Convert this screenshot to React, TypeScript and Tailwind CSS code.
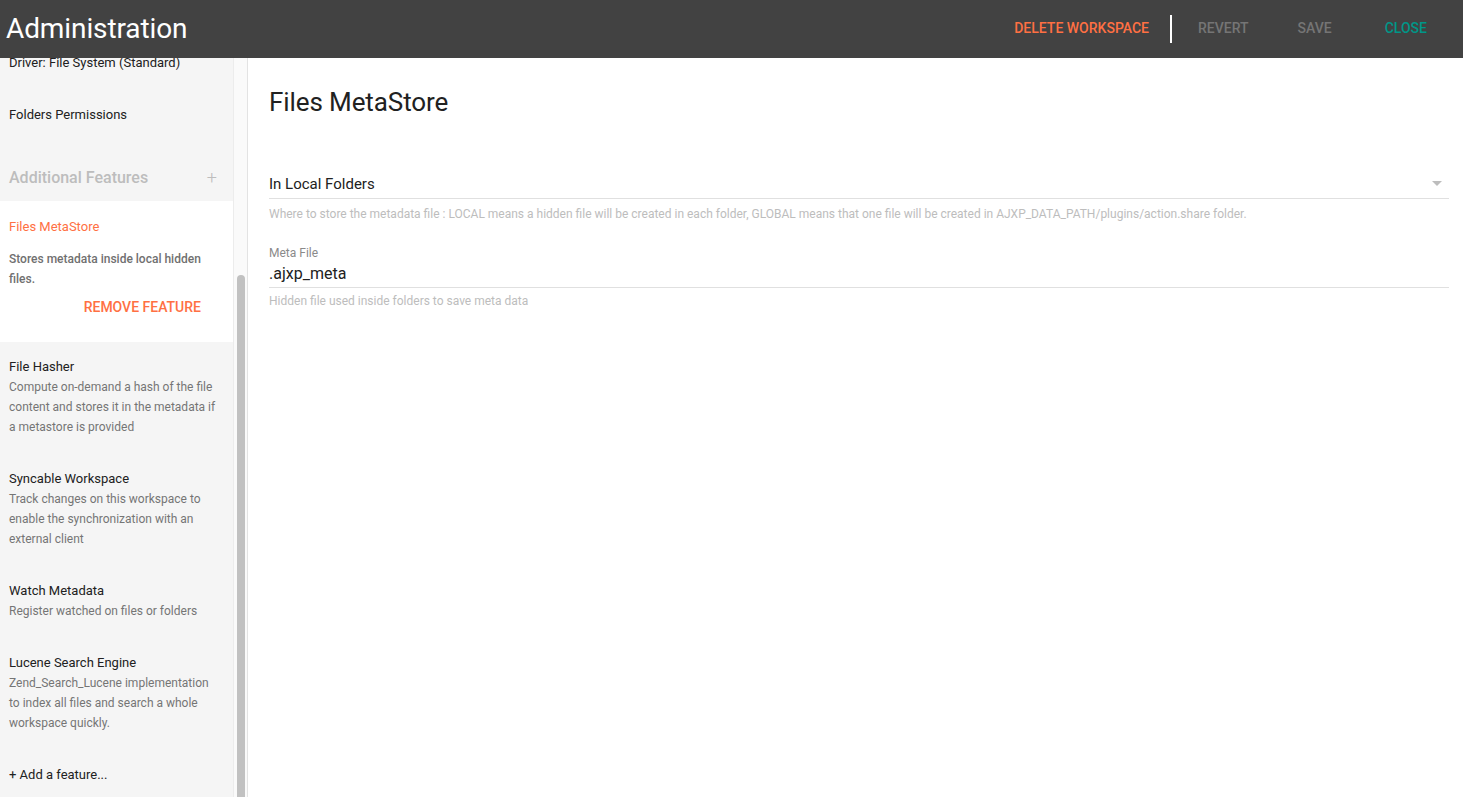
const features = [
  {
    title: 'File Hasher',
    desc: 'Compute on-demand a hash of the file content and stores it in the metadata if a metastore is provided',
  },
  {
    title: 'Syncable Workspace',
    desc: 'Track changes on this workspace to enable the synchronization with an external client',
  },
  {
    title: 'Watch Metadata',
    desc: 'Register watched on files or folders',
  },
  {
    title: 'Lucene Search Engine',
    desc: 'Zend_Search_Lucene implementation to index all files and search a whole workspace quickly.',
  },
];

const Header = () => (
  <div className="h-[58px] bg-[#424242] flex items-center justify-between shrink-0">
    <h1 className="pl-[6px] text-[28px] text-white leading-none tracking-[-0.1px]">Administration</h1>
    <div className="flex items-center h-full pr-[20px] -mt-[1px]">
      <button className="px-[15px] text-[14px] font-medium text-[#ff7043] uppercase">Delete Workspace</button>
      <div className="w-[2px] h-[28px] bg-white mx-[6px] mt-[1px]" />
      <button className="ml-[4px] px-[16px] text-[14px] font-medium text-[#757575] uppercase">Revert</button>
      <button className="ml-[17px] px-[16px] text-[14px] font-medium text-[#757575] uppercase">Save</button>
      <button className="ml-[21px] px-[16px] text-[14px] font-medium text-[#009688] uppercase">Close</button>
    </div>
  </div>
);

const Sidebar = () => (
  <div className="flex shrink-0 h-full">
    <div className="w-[233px] bg-[#f5f5f5] overflow-hidden">
      <div className="-mt-[3px] px-[9px] text-[13px] leading-[16px] text-[#212121]">Driver: File System (Standard)</div>
      <div className="px-[9px] pt-[36px] text-[13px] leading-[16px] text-[#212121]">Folders Permissions</div>
      <div className="px-[9px] pt-[45px] pb-[13px] flex items-center justify-between">
        <span className="text-[16px] leading-[20px] font-medium text-[#bdbdbd]">Additional Features</span>
        <span className="pr-[7px] text-[18px] leading-[20px] font-light text-[#bdbdbd]">+</span>
      </div>
      <div className="bg-white px-[9px] pt-[18px] pb-[26px]">
        <div className="text-[13px] leading-[16px] text-[#ff7043]">Files MetaStore</div>
        <div className="pt-[14px] text-[12px] leading-[20px] font-medium text-[#707070] pr-[20px]">
          Stores metadata inside local hidden files.
        </div>
        <div className="flex justify-end pr-[23px] pt-[9px]">
          <span className="text-[14px] leading-[18px] font-medium text-[#ff7043] uppercase">Remove Feature</span>
        </div>
      </div>
      <div className="px-[9px] pt-[17px]">
        {features.map((f) => (
          <div key={f.title} className="pb-[34px]">
            <div className="text-[13px] leading-[16px] text-[#212121]">{f.title}</div>
            <div className="pt-[2px] text-[12px] leading-[20px] text-[#757575] pr-[8px]">{f.desc}</div>
          </div>
        ))}
        <div className="text-[13px] leading-[16px] text-[#212121]">+ Add a feature...</div>
      </div>
    </div>
    <div className="w-[15px] bg-[#fafafa] border-l border-[#ececec] border-r border-r-[#e3e3e3] flex flex-col items-center pt-[217px]">
      <div className="w-[8px] flex-1 bg-[#c1c1c1] rounded-t-[4px]" />
    </div>
  </div>
);

const Main = () => (
  <div className="flex-1 bg-white pl-[21px] pr-[14px] pt-[27px]">
    <h2 className="text-[26px] leading-[34px] text-[#212121] tracking-[-0.1px]">Files MetaStore</h2>
    <div className="pt-[54px]">
      <div className="flex items-center justify-between border-b border-[#e0e0e0] pb-[3px]">
        <span className="text-[15px] leading-[22px] text-[#212121]">In Local Folders</span>
        <svg width="12" height="6" viewBox="0 0 12 6" className="mr-[6px]">
          <path d="M1 0 L11 0 L6 5 Z" fill="#bdbdbd" />
        </svg>
      </div>
      <div className="pt-[7px] text-[12px] leading-[16px] text-[#bdbdbd]">
        Where to store the metadata file : LOCAL means a hidden file will be created in each folder, GLOBAL means that one file will be created in AJXP_DATA_PATH/plugins/action.share folder.
      </div>
    </div>
    <div className="pt-[24px]">
      <div className="text-[12px] leading-[14px] text-[#8a8a8a]">Meta File</div>
      <div className="border-b border-[#e0e0e0] pt-[2px] pb-[1px]">
        <span className="text-[16px] leading-[20px] text-[#212121]">.ajxp_meta</span>
      </div>
      <div className="pt-[5px] text-[12px] leading-[16px] text-[#bdbdbd]">Hidden file used inside folders to save meta data</div>
    </div>
  </div>
);

export default function App() {
  return (
    <div className="w-[1463px] h-[797px] flex flex-col overflow-hidden font-['Roboto',sans-serif]">
      <Header />
      <div className="flex flex-1 min-h-0">
        <Sidebar />
        <Main />
      </div>
    </div>
  );
}
